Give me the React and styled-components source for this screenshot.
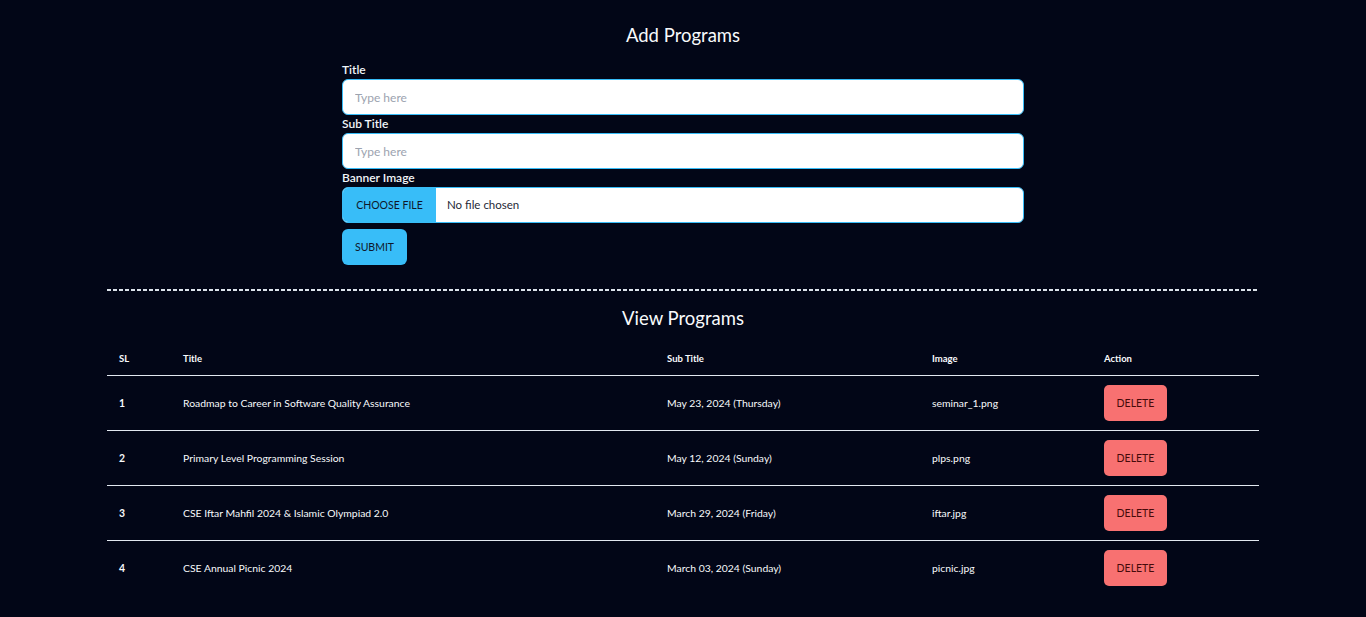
import React from 'react';
import styled, { createGlobalStyle } from 'styled-components';

const GlobalStyle = createGlobalStyle`
  html, body {
    margin: 0;
    padding: 0;
    background: #020617;
    font-family: Lato, "Open Sans", sans-serif;
    color: #f8fafc;
  }
  * { box-sizing: border-box; }
`;

const Page = styled.main`
  width: 1152px;
  margin: 0 auto;
  padding: 23px 0 20px;
`;

const Heading = styled.h2`
  margin: 0;
  text-align: center;
  font-size: 18.5px;
  font-weight: 400;
  line-height: 24px;
`;

const Form = styled.form`
  width: 682px;
  margin: 14px auto 0;
  display: flex;
  flex-direction: column;
`;

const Label = styled.label`
  font-size: 12px;
  font-weight: 600;
  line-height: 18px;
  color: #f1f5f9;
`;

const TextInput = styled.input`
  height: 36px;
  width: 100%;
  border: 1px solid #38bdf8;
  border-radius: 6px;
  background: #fff;
  padding: 0 12px;
  font-family: inherit;
  font-size: 12px;
  color: #1f2937;
  outline: none;
  &::placeholder { color: #9ca3af; }
`;

const FileInput = styled.input`
  height: 36px;
  width: 100%;
  border: 1px solid #38bdf8;
  border-radius: 6px;
  background: #fff;
  padding: 0;
  font-family: inherit;
  font-size: 11.5px;
  color: #1f2937;
  overflow: hidden;
  &::file-selector-button {
    height: 100%;
    width: 93px;
    margin: 0 11px 0 0;
    border: none;
    background: #38bdf8;
    color: #0f172a;
    font-family: inherit;
    font-size: 10.5px;
    text-transform: uppercase;
    cursor: pointer;
  }
`;

const SubmitButton = styled.button`
  align-self: flex-start;
  margin-top: 6px;
  height: 36px;
  width: 65px;
  padding: 0;
  border: none;
  border-radius: 6px;
  background: #38bdf8;
  color: #0f172a;
  font-family: inherit;
  font-size: 10.5px;
  text-transform: uppercase;
  cursor: pointer;
`;

const Divider = styled.div`
  height: 2px;
  margin: 24px 0 15px;
  background: repeating-linear-gradient(90deg, #dbe2ea 0 4px, transparent 4px 6px);
`;

const Table = styled.table`
  width: 100%;
  margin-top: 13px;
  border-collapse: collapse;
  table-layout: fixed;
  font-size: 10.4px;
`;

const Th = styled.th`
  width: ${p => p.$w}px;
  text-align: left;
  font-weight: 700;
  font-size: 9.5px;
  height: 32px;
  padding: 0 12px;
  border-bottom: 1px solid #e2e8f0;
`;

const Row = styled.tr`
  border-bottom: 1px solid #e2e8f0;
  &:last-child { border-bottom: none; }
`;

const Td = styled.td`
  height: 55px;
  padding: 0 12px;
  font-weight: ${p => (p.$bold ? 700 : 400)};
  color: #f8fafc;
`;

const DeleteButton = styled.button`
  height: 36px;
  width: 63px;
  padding: 0;
  border: none;
  border-radius: 5px;
  background: #f87171;
  color: #450a0a;
  font-family: inherit;
  font-size: 10.5px;
  text-transform: uppercase;
  cursor: pointer;
`;

const programs = [
  { title: 'Roadmap to Career in Software Quality Assurance', sub: 'May 23, 2024 (Thursday)', image: 'seminar_1.png' },
  { title: 'Primary Level Programming Session', sub: 'May 12, 2024 (Sunday)', image: 'plps.png' },
  { title: 'CSE Iftar Mahfil 2024 & Islamic Olympiad 2.0', sub: 'March 29, 2024 (Friday)', image: 'iftar.jpg' },
  { title: 'CSE Annual Picnic 2024', sub: 'March 03, 2024 (Sunday)', image: 'picnic.jpg' },
];

export default function App() {
  return (
    <>
      <GlobalStyle />
      <Page>
        <Heading>Add Programs</Heading>
        <Form onSubmit={e => e.preventDefault()}>
          <Label htmlFor="title">Title</Label>
          <TextInput id="title" type="text" placeholder="Type here" />
          <Label htmlFor="subtitle">Sub Title</Label>
          <TextInput id="subtitle" type="text" placeholder="Type here" />
          <Label htmlFor="banner">Banner Image</Label>
          <FileInput id="banner" type="file" />
          <SubmitButton type="submit">Submit</SubmitButton>
        </Form>
        <Divider />
        <Heading>View Programs</Heading>
        <Table>
          <thead>
            <tr>
              <Th $w={64}>SL</Th>
              <Th $w={484}>Title</Th>
              <Th $w={265}>Sub Title</Th>
              <Th $w={172}>Image</Th>
              <Th $w={167}>Action</Th>
            </tr>
          </thead>
          <tbody>
            {programs.map((p, i) => (
              <Row key={p.image}>
                <Td $bold>{i + 1}</Td>
                <Td>{p.title}</Td>
                <Td>{p.sub}</Td>
                <Td>{p.image}</Td>
                <Td>
                  <DeleteButton>Delete</DeleteButton>
                </Td>
              </Row>
            ))}
          </tbody>
        </Table>
      </Page>
    </>
  );
}
